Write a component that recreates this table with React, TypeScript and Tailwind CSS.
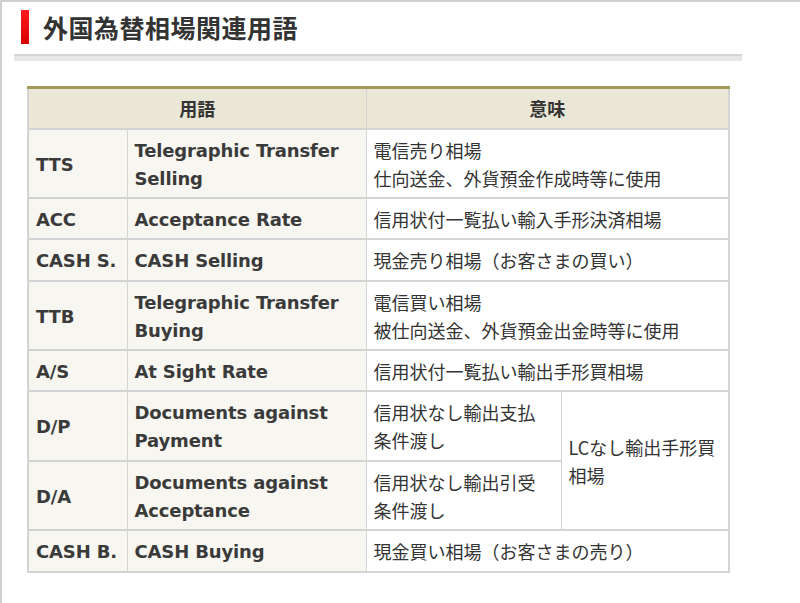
import React from "react";

const font = { fontFamily: '"Noto Sans CJK JP", sans-serif' };
const latinBold = { fontFamily: '"DejaVu Sans", "Noto Sans CJK JP", sans-serif' };

type Row = {
  abbr: string;
  name: string[];
  meaning: string[];
};

const td1 =
  "border-b-2 border-r border-[#d4d4d4] bg-[#f7f6f1] pl-[7px] pr-[2px] pt-[7px] pb-[4.4px] align-middle font-bold text-[#3a3a3a] whitespace-nowrap tracking-[-0.15px]";
const td3 =
  "border-b-2 border-r-2 border-[#d4d4d4] bg-white pl-[7px] pr-[4px] pt-[6px] pb-[5.4px] align-middle text-[#333] whitespace-nowrap";
const td3s =
  "border-b-2 border-r border-[#d4d4d4] bg-white pl-[7px] pr-[4px] pt-[6px] pb-[5.4px] align-middle text-[#333] whitespace-nowrap";

function Lines({ lines }: { lines: string[] }) {
  return (
    <>
      {lines.map((l, i) => (
        <div key={i}>{l}</div>
      ))}
    </>
  );
}

const topRows: Row[] = [
  { abbr: "TTS", name: ["Telegraphic Transfer", "Selling"], meaning: ["電信売り相場", "仕向送金、外貨預金作成時等に使用"] },
  { abbr: "ACC", name: ["Acceptance Rate"], meaning: ["信用状付一覧払い輸入手形決済相場"] },
  { abbr: "CASH S.", name: ["CASH Selling"], meaning: ["現金売り相場（お客さまの買い）"] },
  { abbr: "TTB", name: ["Telegraphic Transfer", "Buying"], meaning: ["電信買い相場", "被仕向送金、外貨預金出金時等に使用"] },
  { abbr: "A/S", name: ["At Sight Rate"], meaning: ["信用状付一覧払い輸出手形買相場"] },
];

export default function App() {
  return (
    <div
      className="w-[800px] h-[603px] overflow-hidden bg-white border-t-2 border-l-2 border-[#cfcfcf]"
      style={font}
    >
      <div className="flex items-center pl-[19px] pt-[6px] h-[44px]">
        <div className="w-[8px] h-[34px] bg-gradient-to-b from-[#ff1a1a] to-[#d80000]" />
        <h1 className="ml-[14px] text-[25px] leading-[34px] font-bold text-[#333] tracking-[0.5px]">
          外国為替相場関連用語
        </h1>
      </div>
      <div className="ml-[12px] mt-[8px] w-[728px] h-[7px] bg-[#e6e6e6] border-t-2 border-[#d6d6d6]" />
      <div className="ml-[25px] mt-[25px]">
        <table className="border-collapse table-fixed w-[701px] text-[18px] leading-[28px]">
          <colgroup>
            <col className="w-[99px]" />
            <col className="w-[239px]" />
            <col className="w-[195px]" />
            <col className="w-[168px]" />
          </colgroup>
          <thead>
            <tr className="h-[41px]">
              <th
                colSpan={2}
                className="border-t-[3px] border-t-[#a39a5c] border-l-2 border-l-[#d4d4d4] border-b-2 border-b-[#d4d4d4] border-r border-r-[#d4d4d4] bg-[#eae7d6] font-bold text-[#333] text-center"
              >
                用語
              </th>
              <th
                colSpan={2}
                className="border-t-[3px] border-t-[#a39a5c] border-r-2 border-r-[#d4d4d4] border-b-2 border-b-[#d4d4d4] bg-[#eae7d6] font-bold text-[#333] text-center"
              >
                意味
              </th>
            </tr>
          </thead>
          <tbody>
            {topRows.map((r) => (
              <tr key={r.abbr}>
                <td className={td1 + " border-l-2"} style={latinBold}>
                  {r.abbr}
                </td>
                <td className={td1} style={latinBold}>
                  <Lines lines={r.name} />
                </td>
                <td colSpan={2} className={td3}>
                  <Lines lines={r.meaning} />
                </td>
              </tr>
            ))}
            <tr>
              <td className={td1 + " border-l-2"} style={latinBold}>
                D/P
              </td>
              <td className={td1} style={latinBold}>
                <Lines lines={["Documents against", "Payment"]} />
              </td>
              <td className={td3s}>
                <Lines lines={["信用状なし輸出支払", "条件渡し"]} />
              </td>
              <td rowSpan={2} className={td3}>
                <Lines lines={["LCなし輸出手形買", "相場"]} />
              </td>
            </tr>
            <tr>
              <td className={td1 + " border-l-2"} style={latinBold}>
                D/A
              </td>
              <td className={td1} style={latinBold}>
                <Lines lines={["Documents against", "Acceptance"]} />
              </td>
              <td className={td3s}>
                <Lines lines={["信用状なし輸出引受", "条件渡し"]} />
              </td>
            </tr>
            <tr>
              <td className={td1 + " border-l-2"} style={latinBold}>
                CASH B.
              </td>
              <td className={td1} style={latinBold}>
                CASH Buying
              </td>
              <td colSpan={2} className={td3}>
                現金買い相場（お客さまの売り）
              </td>
            </tr>
          </tbody>
        </table>
      </div>
    </div>
  );
}
